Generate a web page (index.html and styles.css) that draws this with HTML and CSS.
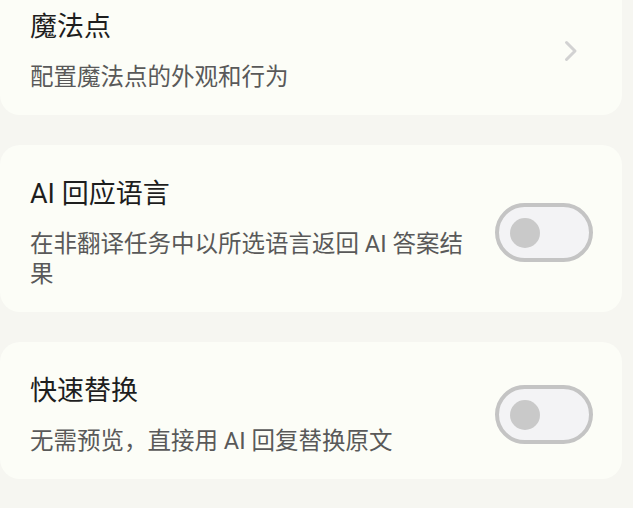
FILE: index.html
```html
<!DOCTYPE html>
<html lang="zh-CN">
<head>
  <meta charset="UTF-8">
  <title>设置</title>
  <link rel="stylesheet" href="styles.css">
</head>
<body>
  <div class="list">
    <div class="card">
      <div class="text">
        <div class="title">魔法点</div>
        <div class="sub">配置魔法点的外观和行为</div>
      </div>
      <svg class="chevron" width="14" height="22" viewBox="0 0 14 22">
        <polyline points="2.5,2.5 11,11 2.5,19.5" fill="none" stroke="#d2d2d2" stroke-width="3" stroke-linecap="round" stroke-linejoin="round"/>
      </svg>
    </div>

    <div class="card">
      <div class="text">
        <div class="title">AI 回应语言</div>
        <div class="sub">在非翻译任务中以所选语言返回 AI 答案结果</div>
      </div>
      <div class="toggle"><div class="knob"></div></div>
    </div>

    <div class="card">
      <div class="text">
        <div class="title">快速替换</div>
        <div class="sub">无需预览，直接用 AI 回复替换原文</div>
      </div>
      <div class="toggle"><div class="knob"></div></div>
    </div>
  </div>
</body>
</html>
```

FILE: styles.css
```css
body { margin: 0; background: #f6f6f1; font-family: Roboto, "Noto Sans CJK SC", sans-serif; overflow: hidden; }
.list { display: flex; flex-direction: column; gap: 30px; margin: -22px 11px 0 0; }
.card { display: flex; align-items: center; gap: 20px; background: #fcfdf7; border-radius: 20px; padding: 31px 29px 23px 30px; }
.text { flex: 1; min-width: 0; }
.title { font-size: 27px; line-height: 36px; color: #1e1e1e; }
.sub { font-size: 23.5px; line-height: 30px; color: #595959; margin-top: 17px; }
.chevron { flex: none; margin-right: 15px; }
.toggle { flex: none; box-sizing: border-box; width: 98px; height: 59px; border: 4px solid #c4c4c4; border-radius: 30px; background: #f3f3f5; display: flex; align-items: center; }
.knob { width: 30px; height: 30px; border-radius: 50%; background: #c9c9c9; margin-left: 11px; }
```
